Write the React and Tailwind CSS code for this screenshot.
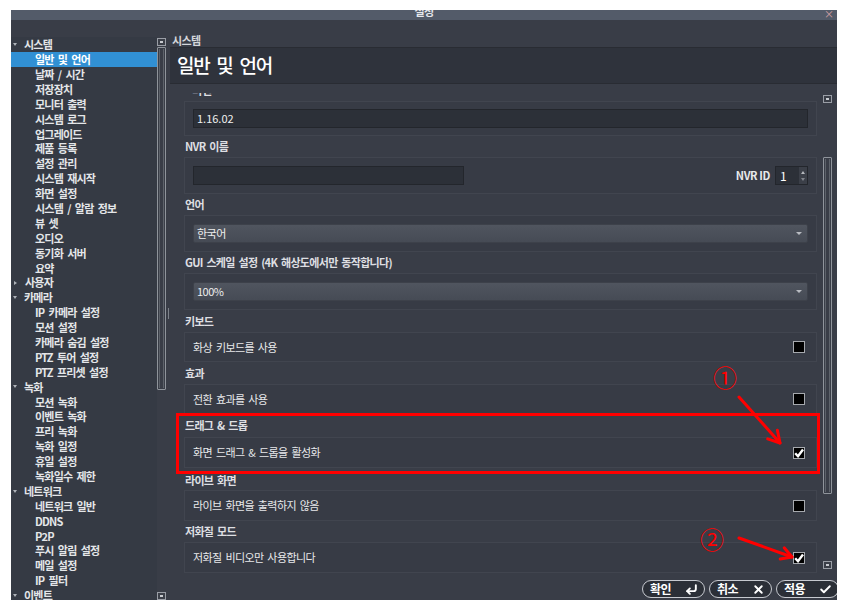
import React from 'react';
import { CornerDownLeft, X, Check } from 'lucide-react';

const tree = [
  { t: '시스템', top: 'down' },
  { t: '일반 및 언어', sel: true },
  { t: '날짜 / 시간' },
  { t: '저장장치' },
  { t: '모니터 출력' },
  { t: '시스템 로그' },
  { t: '업그레이드' },
  { t: '제품 등록' },
  { t: '설정 관리' },
  { t: '시스템 재시작' },
  { t: '화면 설정' },
  { t: '시스템 / 알람 정보' },
  { t: '뷰 셋' },
  { t: '오디오' },
  { t: '동기화 서버' },
  { t: '요약' },
  { t: '사용자', top: 'right' },
  { t: '카메라', top: 'down' },
  { t: 'IP 카메라 설정' },
  { t: '모션 설정' },
  { t: '카메라 숨김 설정' },
  { t: 'PTZ 투어 설정' },
  { t: 'PTZ 프리셋 설정' },
  { t: '녹화', top: 'down' },
  { t: '모션 녹화' },
  { t: '이벤트 녹화' },
  { t: '프리 녹화' },
  { t: '녹화 일정' },
  { t: '휴일 설정' },
  { t: '녹화일수 제한' },
  { t: '네트워크', top: 'down' },
  { t: '네트워크 일반' },
  { t: 'DDNS' },
  { t: 'P2P' },
  { t: '푸시 알림 설정' },
  { t: '메일 설정' },
  { t: 'IP 필터' },
  { t: '이벤트', top: 'down' },
];

const checkRows = [
  { label: '키보드', text: '화상 키보드를 사용', on: false, lh: 'h-[22px]', h: 'h-[30px]' },
  { label: '효과', text: '전환 효과를 사용', on: false, lh: 'h-[22px]', h: 'h-[30px]' },
  { label: '드래그 & 드롭', text: '화면 드래그 & 드롭을 활성화', on: true, lh: 'h-[23px]', h: 'h-[31px]' },
  { label: '라이브 화면', text: '라이브 화면을 출력하지 않음', on: false, lh: 'h-[22px] pt-[2px]', h: 'h-[31px]' },
  { label: '저화질 모드', text: '저화질 비디오만 사용합니다', on: true, lh: 'h-[21px]', h: 'h-[31px]' },
];

const ScrollButton = () => (
  <div className="w-[9px] h-[8px] border border-[#9a9ea6] bg-[#3b3f48] flex items-center justify-center">
    <div className="w-[3px] h-[2px] bg-[#c8cbd0]" />
  </div>
);

const Checkbox = ({ on }) => (
  <div className="w-[12px] h-[12px] border border-[#a6a9ae] bg-black flex items-center justify-center">
    {on && (
      <svg width="10" height="10" viewBox="0 0 10 10">
        <path d="M1.2 5.2 L4 8.2 L9 1.5" fill="none" stroke="#ffffff" strokeWidth="2.4" />
      </svg>
    )}
  </div>
);

const Label = ({ children, h = 'h-[21px]' }) => (
  <div className={`${h} flex items-center pl-[1px] text-[11px] font-bold text-[#dedfe2] tracking-[-0.7px] [word-spacing:2px]`}>{children}</div>
);

const Group = ({ children, h }) => (
  <div className={`${h} border border-[#41454f] bg-[#373b45] flex items-center px-[8px]`}>{children}</div>
);

const Combo = ({ value }) => (
  <div className="flex-1 h-[19px] rounded-[2px] bg-gradient-to-b from-[#50555f] to-[#464b55] border border-[#3d414a] flex items-center justify-between pl-[3px] pr-[5px]">
    <span className="text-[11px] text-[#eeeeee] tracking-[-0.5px]">{value}</span>
    <div className="w-0 h-0 border-l-[3px] border-r-[3px] border-t-[3px] border-l-transparent border-r-transparent border-t-[#b9bcc2]" />
  </div>
);

const Pill = ({ label, Icon }) => (
  <div className="w-[63px] h-[18px] shrink-0 rounded-full border-[1.5px] border-[#c7cad0] bg-[#2b2f37] flex items-center justify-between pl-[7px] pr-[6px]">
    <span className="text-[12px] font-bold text-white tracking-[-0.5px] leading-none">{label}</span>
    <Icon size={13} strokeWidth={3.5} color="#ffffff" />
  </div>
);

export default function App() {
  return (
    <div className="relative w-[849px] h-[605px] bg-white overflow-hidden font-['Noto_Sans_CJK_KR','Noto_Sans',sans-serif]">
      <div className="ml-[11px] mt-[10px] w-[826px] h-[590px] flex flex-col bg-[#393d47] overflow-hidden">
        {/* title bar, cut at top */}
        <div className="relative h-[10px] shrink-0 bg-[#535b69] flex justify-center overflow-hidden">
          <span className="-mt-[5px] text-[11px] leading-[13px] font-bold text-[#e6e8ec] tracking-[-0.5px]">설정</span>
          <span className="absolute right-[3px] -top-[4px] text-[10px] text-[#d4a0a4]">×</span>
        </div>

        <div className="flex-1 flex min-h-0">
          {/* left tree */}
          <div className="w-[155px] shrink-0 flex flex-col">
            <div className="h-[17px] shrink-0" />
            <div className="flex-1 flex min-h-0">
              <div className="w-[146px] bg-[#353a44] overflow-hidden">
                {tree.map((it) => (
                  <div
                    key={it.t}
                    className={`h-[14.9px] flex items-center text-[11px] font-bold tracking-[-0.8px] [word-spacing:2.5px] whitespace-nowrap ${
                      it.sel ? 'bg-[#3190d4] text-white' : 'text-[#e4e6e9]'
                    } ${it.top ? 'pl-[2px]' : 'pl-[24px]'}`}
                  >
                    {it.top === 'down' && (
                      <div className="w-0 h-0 mr-[4px] border-l-[2.5px] border-r-[2.5px] border-t-[3px] border-l-transparent border-r-transparent border-t-[#aeb2b8]" />
                    )}
                    {it.top === 'right' && (
                      <div className="w-0 h-0 mr-[5px] ml-[1px] border-t-[2.5px] border-b-[2.5px] border-l-[3px] border-t-transparent border-b-transparent border-l-[#aeb2b8]" />
                    )}
                    <span className={it.top ? 'ml-[3px]' : ''}>{it.t}</span>
                  </div>
                ))}
              </div>
              <div className="w-[9px] flex flex-col">
                <div className="mt-[1px]"><ScrollButton /></div>
                <div className="h-[343px] border border-[#8f949b] rounded-[1px] mt-[1px] p-[1px]">
                  <div className="h-full border-x border-[#5d626a]" />
                </div>
                <div className="flex-1" />
                <ScrollButton />
              </div>
            </div>
          </div>

          {/* splitter */}
          <div className="w-[4px] shrink-0 flex items-center justify-center">
            <div className="h-[11px] w-[1px] mt-[7px] bg-[#7d828a]" />
          </div>

          {/* right side */}
          <div className="flex-1 min-w-0 flex flex-col">
            <div className="h-[27px] shrink-0 pl-[2px] pt-[6px]">
              <span className="text-[11px] leading-[14px] font-bold text-[#d4d6da] underline underline-offset-2 tracking-[-0.6px]">시스템</span>
            </div>
            <div className="h-[37px] shrink-0 bg-[#2f333c] border-y border-[#292c33] flex items-center pl-[7px]">
              <span className="text-[19px] font-medium text-white tracking-[-1.3px] [word-spacing:4px]">일반 및 언어</span>
            </div>

            <div className="h-[491px] shrink-0 flex overflow-hidden">
              <div className="w-[647px] pl-[14px] flex flex-col">
                {/* partially hidden version label */}
                <div className="h-[17px] pt-[9px]">
                  <div className="h-[3px] overflow-hidden pl-[8px]">
                    <div className="-mt-[9px] text-[11px] leading-[12px] font-bold text-[#dedfe2]">버전</div>
                  </div>
                </div>
                <Group h="h-[35px]">
                  <div className="flex-1 h-[19px] bg-[#2c3038] border border-[#23262c] flex items-center pl-[3px]">
                    <span className="text-[11px] text-[#f0f0f0]">1.16.02</span>
                  </div>
                </Group>

                <Label>NVR 이름</Label>
                <Group h="h-[37px]">
                  <div className="w-[271px] h-[19px] bg-[#2c3038] border border-[#23262c]" />
                  <div className="flex-1" />
                  <span className="text-[11px] font-bold text-[#e8e9eb] tracking-[-0.4px] mr-[5px]">NVR ID</span>
                  <div className="w-[33px] h-[19px] bg-[#2c3038] border border-[#23262c] flex items-center justify-between pl-[4px]">
                    <span className="text-[12px] text-white">1</span>
                    <div className="w-[8px] h-full bg-[#3b3f48] flex flex-col items-center justify-center gap-[4px]">
                      <div className="w-0 h-0 border-l-[2px] border-r-[2px] border-b-[3px] border-l-transparent border-r-transparent border-b-[#b5b8bd]" />
                      <div className="w-0 h-0 border-l-[2px] border-r-[2px] border-t-[3px] border-l-transparent border-r-transparent border-t-[#80848b]" />
                    </div>
                  </div>
                </Group>

                <Label>언어</Label>
                <Group h="h-[37px]">
                  <Combo value="한국어" />
                </Group>

                <Label>GUI 스케일 설정 (4K 해상도에서만 동작합니다)</Label>
                <Group h="h-[37px]">
                  <Combo value="100%" />
                </Group>

                {checkRows.map((r) => (
                  <React.Fragment key={r.label}>
                    <Label h={r.lh}>{r.label}</Label>
                    <Group h={r.h}>
                      <span className="flex-1 text-[11px] text-[#e8e9eb] tracking-[-0.6px] [word-spacing:2px]">{r.text}</span>
                      <div className="mr-[3px]">
                        <Checkbox on={r.on} />
                      </div>
                    </Group>
                  </React.Fragment>
                ))}
              </div>

              <div className="w-[6px] shrink-0" />
              <div className="w-[9px] shrink-0 flex flex-col">
                <div className="mt-[11px]"><ScrollButton /></div>
                <div className="h-[54px]" />
                <div className="h-[337px] border border-[#8f949b] rounded-[1px] p-[1px]">
                  <div className="h-full border-x border-[#5d626a]" />
                </div>
                <div className="h-[67px]" />
                <ScrollButton />
              </div>
            </div>

            <div className="flex-1 flex justify-end items-start pt-[5px] gap-[4px] -mr-[2px]">
              <Pill label="확인" Icon={CornerDownLeft} />
              <Pill label="취소" Icon={X} />
              <Pill label="적용" Icon={Check} />
            </div>
          </div>
        </div>
      </div>

      {/* annotations */}
      <div className="absolute left-[176px] top-[413px] w-[644px] h-[61px] border-[3px] border-[#ff0000] pointer-events-none" />
      <span className="absolute left-[713px] top-[362px] text-[24px] leading-[30px] text-[#ff0000]">①</span>
      <span className="absolute left-[700px] top-[524px] text-[24px] leading-[30px] text-[#ff0000]">②</span>
      <svg className="absolute left-0 top-0 pointer-events-none" width="849" height="605">
        <g stroke="#ff0000" strokeWidth="3" fill="none" strokeLinecap="round" strokeLinejoin="round">
          <line x1="739" y1="397" x2="780" y2="443" />
          <polyline points="777.4,430.3 780,443 767.7,438.9" />
          <line x1="739" y1="538" x2="792" y2="557" />
          <polyline points="784.2,547.8 792,557 780.2,559.1" />
        </g>
      </svg>
    </div>
  );
}
